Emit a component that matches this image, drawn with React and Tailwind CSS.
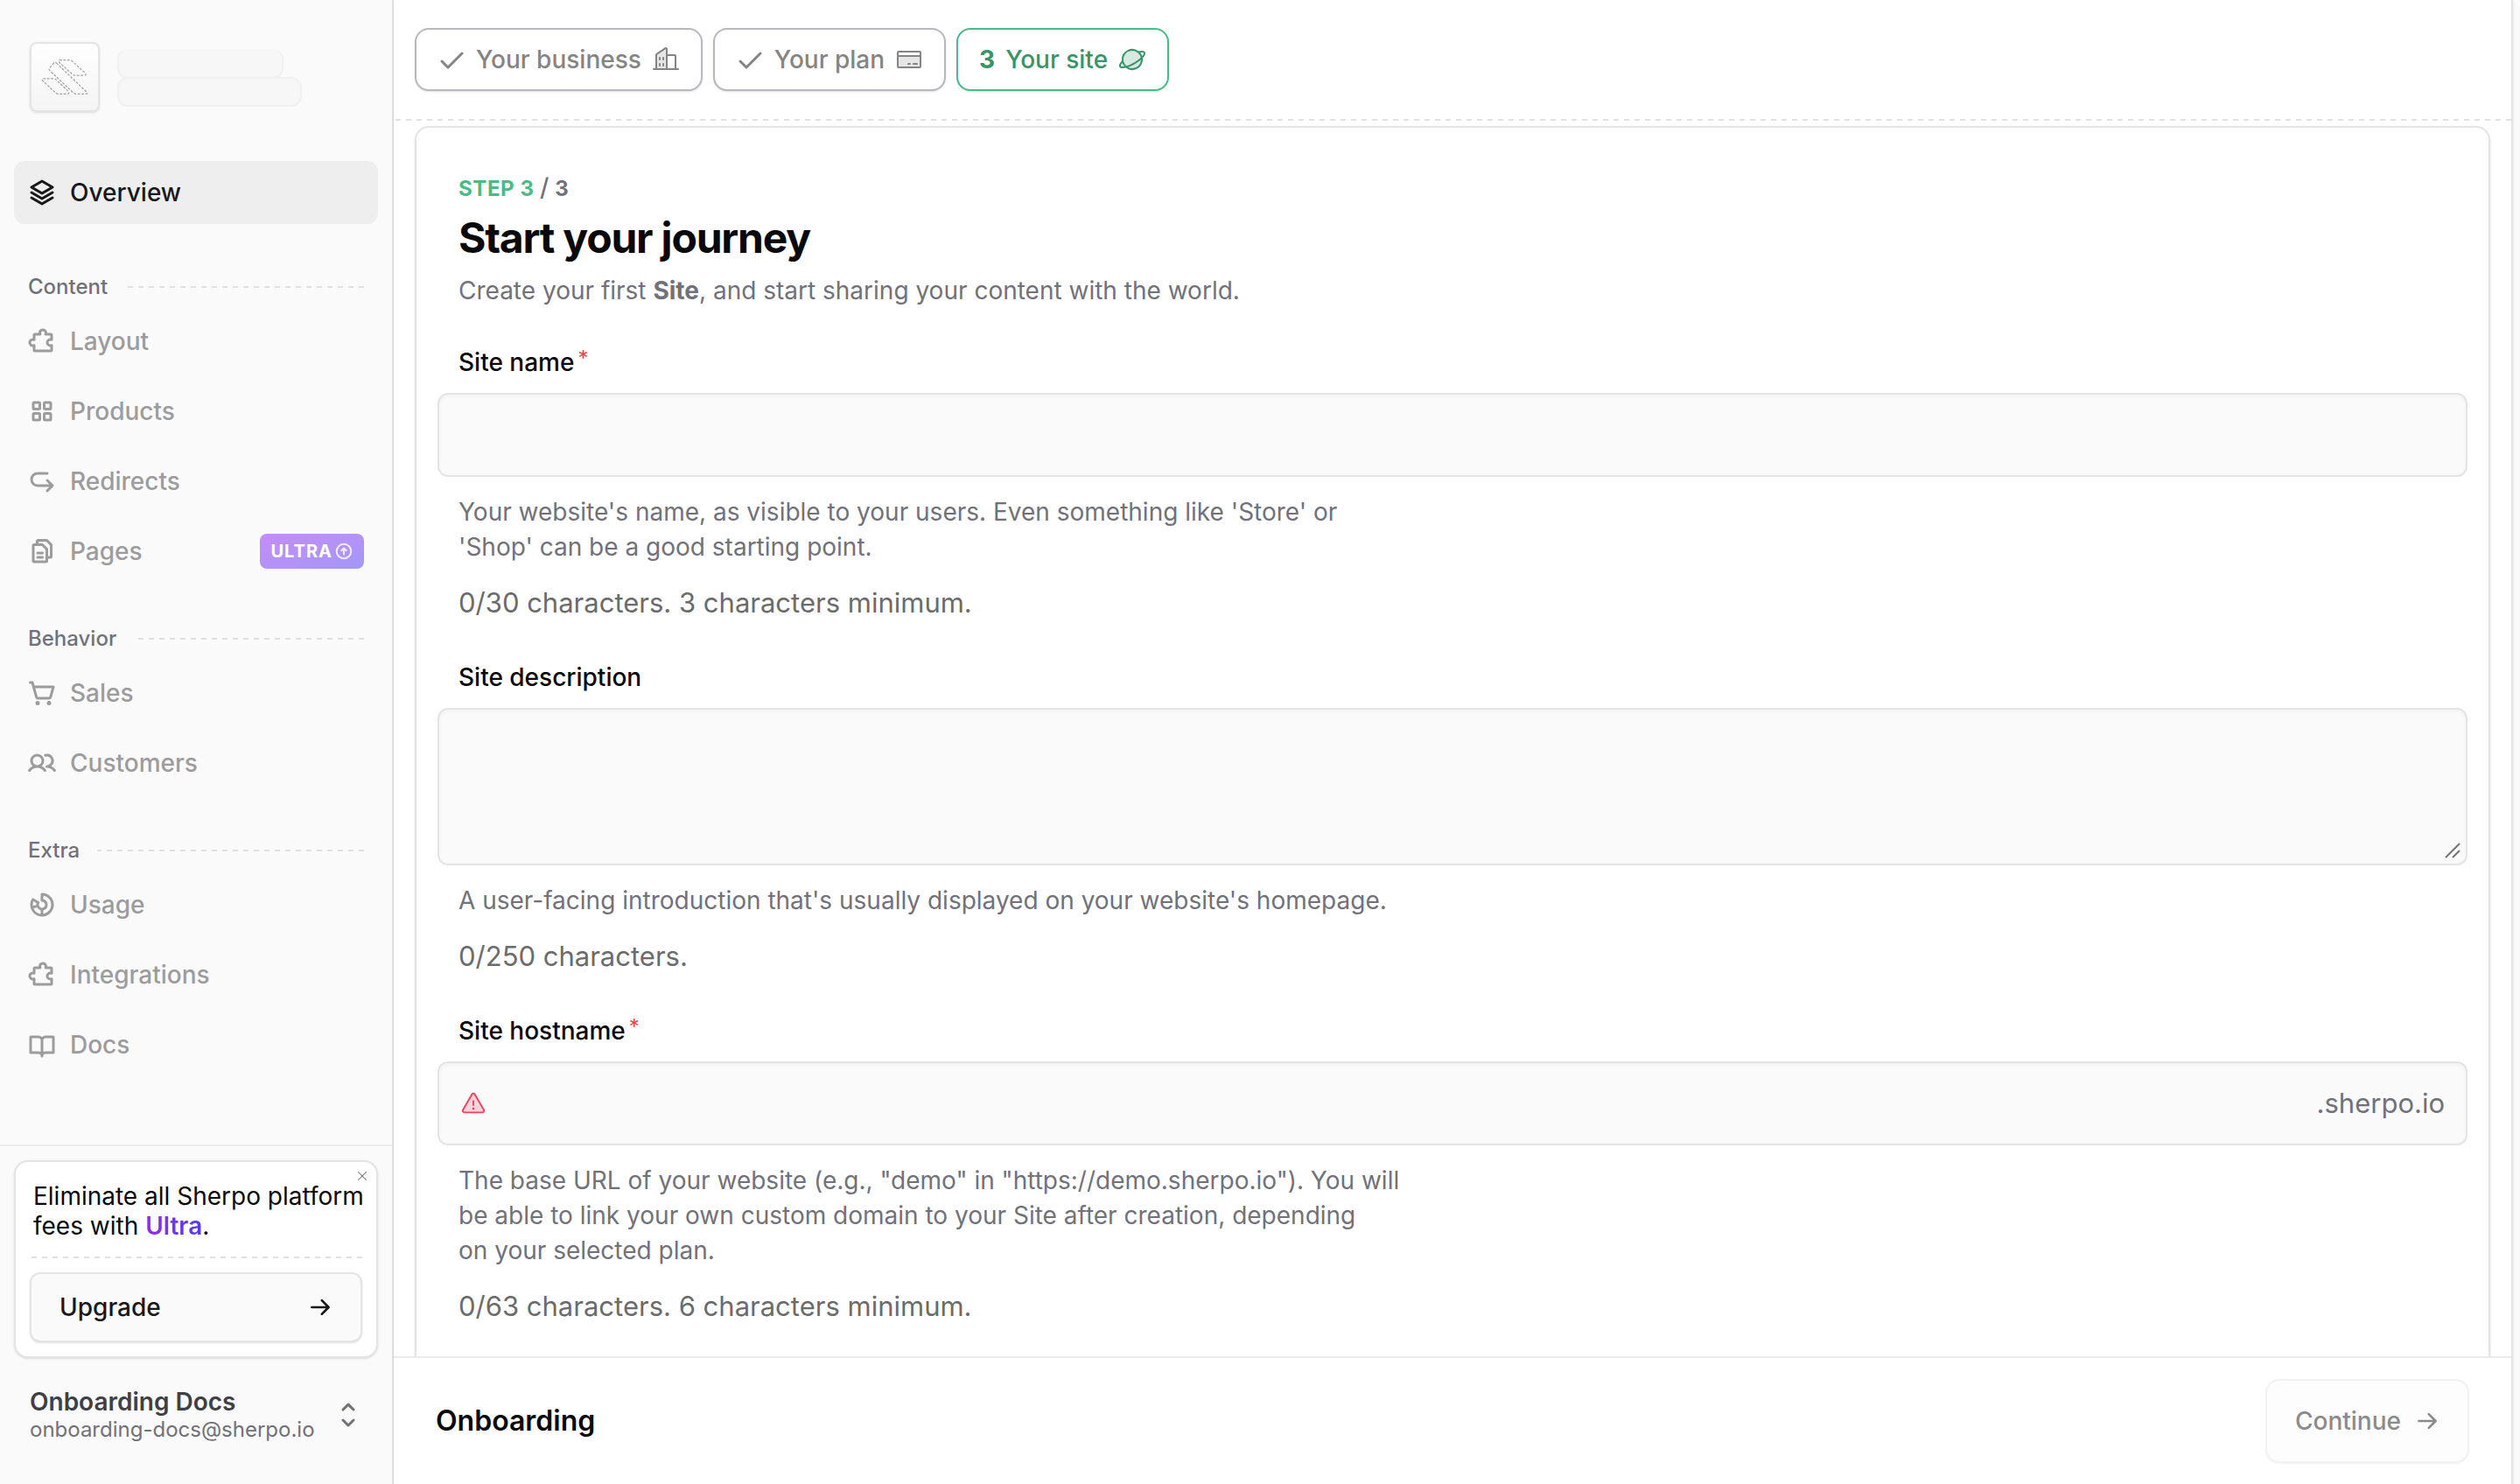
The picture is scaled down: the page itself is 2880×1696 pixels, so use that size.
import React from 'react';
import {
    PiArrowCircleUpBold,
    PiArrowRightBold,
    PiArrowUDownRightBold,
    PiBookOpenBold,
    PiBuildingsDuotone,
    PiCaretUpDownBold,
    PiChartDonutBold,
    PiCheckBold,
    PiCreditCardDuotone,
    PiFilesBold,
    PiPlanetDuotone,
    PiPuzzlePieceBold,
    PiShoppingCartSimpleBold,
    PiSquaresFourBold,
    PiStackBold,
    PiUsersBold,
    PiWarningDuotone,
    PiX
} from 'react-icons/pi';

const sections = [
    {
        title: 'Content',
        items: [
            { icon: PiPuzzlePieceBold, label: 'Layout' },
            { icon: PiSquaresFourBold, label: 'Products' },
            { icon: PiArrowUDownRightBold, label: 'Redirects' },
            { icon: PiFilesBold, label: 'Pages', ultra: true }
        ]
    },
    {
        title: 'Behavior',
        items: [
            { icon: PiShoppingCartSimpleBold, label: 'Sales' },
            { icon: PiUsersBold, label: 'Customers' }
        ]
    },
    {
        title: 'Extra',
        items: [
            { icon: PiChartDonutBold, label: 'Usage' },
            { icon: PiPuzzlePieceBold, label: 'Integrations' },
            { icon: PiBookOpenBold, label: 'Docs' }
        ]
    }
];

// Dashed rule, 6px on and 6px off
const DashedLine = ({ className = '' }) => (
    <div className={`h-[2px] bg-[repeating-linear-gradient(270deg,#e0e0e0_0_6px,transparent_6px_12px)] ${className}`} />
);

const Logo = () => (
    <svg viewBox="0 0 240 240" className="w-full h-full" fill="none" stroke="#a3a3a3" strokeWidth="4" strokeDasharray="9 5">
        <path d="M101 59H138Q143 59 147 63L194 106Q199 114 190 114H156Q151 114 147 110L101 68Q97 62 101 59Z" />
        <path d="M90 70L199 174Q204 181 196 181H160Q156 181 152 178L65 96Q62 92 65 88L80 70Q85 65 90 70Z" />
        <path d="M42 126H80Q85 126 89 130L133 172Q138 181 130 181H96Q92 181 88 178L41 134Q36 128 42 126Z" />
    </svg>
);

const UltraBadge = () => (
    <span className="ml-auto h-10 px-3 flex items-center gap-[2px] rounded-lg bg-gradient-to-br from-[#c48cf8] to-[#a298f5] text-white text-[20px] font-bold tracking-wider">
        ULTRA
        <PiArrowCircleUpBold size={22} className="opacity-80" />
    </span>
);

const Sidebar = () => (
    <aside className="w-[450px] shrink-0 flex flex-col bg-[#fafafa] border-r-2 border-[#e4e4e4]">
        <div className="flex items-center gap-5 px-[34px] pt-12">
            <div className="size-20 rounded-lg border-2 border-[#e4e4e7] bg-gradient-to-b from-white to-[#f4f4f5] shadow-sm">
                <Logo />
            </div>
            <div className="pt-[2px]">
                <div className="w-[190px] h-[34px] rounded-xl border-2 border-t-0 border-[#f0f0f0] bg-[#f7f7f7]" />
                <div className="w-[211px] h-[34px] -mt-[2px] rounded-xl border-2 border-[#f0f0f0] bg-[#f7f7f7]" />
            </div>
        </div>

        <nav className="px-4 pt-14 text-[28px] font-medium">
            <a href="#overview" className="h-[72px] px-4 flex items-center gap-4 rounded-xl bg-[#eeeeee] text-[#18181b]">
                <PiStackBold size={32} />
                Overview
            </a>
            <div className="mt-2">
                {sections.map((section) => (
                    <div key={section.title} className="pt-11">
                        <div className="h-10 mb-[6px] px-4 flex items-center gap-5">
                            <h2 className="text-[24px] text-[#71717a]">{section.title}</h2>
                            <DashedLine className="flex-1" />
                        </div>
                        <div className="flex flex-col gap-2">
                            {section.items.map((item) => {
                                const Icon = item.icon;
                                return (
                                    <a
                                        key={item.label}
                                        href={`#${item.label.toLowerCase()}`}
                                        className="h-[72px] px-4 flex items-center gap-4 rounded-xl text-[#9c9c9e]"
                                    >
                                        <Icon size={32} />
                                        {item.label}
                                        {item.ultra && <UltraBadge />}
                                    </a>
                                );
                            })}
                        </div>
                    </div>
                ))}
            </div>
        </nav>

        <div className="mt-auto px-4 pt-4 pb-[47px] border-t-2 border-[#ebebeb]">
            <div className="relative p-4 rounded-2xl border-2 border-[#e4e4e4] bg-white shadow-sm">
                <button aria-label="Dismiss" className="absolute top-2 right-2 text-[#71717a]">
                    <PiX size={16} />
                </button>
                <p className="px-1 pt-[6px] pb-[18px] text-[28px] leading-[34px] whitespace-nowrap text-[#09090b]">
                    Eliminate all Sherpo platform
                    <br />
                    fees with{' '}
                    <span className="font-semibold bg-gradient-to-r from-[#9327f5] to-[#4f39f6] bg-clip-text text-transparent">
                        Ultra
                    </span>
                    .
                </p>
                <DashedLine />
                <button className="mt-4 w-full h-20 px-8 flex items-center justify-between rounded-xl border-2 border-[#e4e4e4] bg-[#fafafa] text-[28px] font-medium text-[#18181b] shadow-sm">
                    Upgrade
                    <PiArrowRightBold size={28} />
                </button>
            </div>

            <button className="mt-[33px] w-full px-[18px] flex items-center justify-between text-left">
                <span>
                    <span className="block text-[28px] leading-[34px] font-semibold text-[#3f3f46]">Onboarding Docs</span>
                    <span className="block text-[24px] leading-[30px] text-[#71717a]">onboarding-docs@sherpo.io</span>
                </span>
                <PiCaretUpDownBold size={32} className="text-[#71717a]" />
            </button>
        </div>
    </aside>
);

const Step = ({ lead, label, icon: Icon, active }) => (
    <button
        className={`h-[72px] px-6 flex items-center gap-3 rounded-2xl border-2 bg-white text-[28px] font-medium shadow-sm ${
            active ? 'border-[#48bb86] text-[#369467]' : 'border-[#b8b8bd] text-[#848484]'
        }`}
    >
        {lead}
        {label}
        <Icon size={32} />
    </button>
);

const inputStyles = 'w-full rounded-xl border-2 border-[#e4e4e4] bg-[#fafafa] text-[31px] shadow-[inset_0_2px_4px_rgba(0,0,0,0.04)] outline-none';

const Field = ({ id, label, required, help, count, children }) => (
    <div>
        <label htmlFor={id} className="mb-[15px] px-6 flex items-start gap-1 text-[28px] leading-10 font-medium text-[#09090b]">
            {label}
            {required && <span className="text-[24px] leading-8 font-normal text-[#ef4444]">*</span>}
        </label>
        {children}
        <p className="mt-5 px-6 text-[28px] leading-10 text-[#71717a]">{help}</p>
        <p className="mt-5 px-6 text-[31px] leading-12 text-[#6b6b6b]">{count}</p>
    </div>
);

const App = () => {
    return (
        <div className="h-screen flex overflow-hidden bg-[#fafafa] font-['Inter',sans-serif]">
            <Sidebar />

            <main className="flex-1 min-w-0 mr-2 flex flex-col bg-white border-r-2 border-[#e4e4e4] shadow-sm">
                {/* Steps */}
                <div className="px-6 py-8 flex gap-3">
                    <Step lead={<PiCheckBold size={32} />} label="Your business" icon={PiBuildingsDuotone} />
                    <Step lead={<PiCheckBold size={32} />} label="Your plan" icon={PiCreditCardDuotone} />
                    <Step lead={<span className="font-bold">3</span>} label="Your site" icon={PiPlanetDuotone} active />
                </div>
                <DashedLine className="shrink-0" />

                {/* Form */}
                <div className="flex-1 min-h-0 overflow-hidden px-6 pt-[6px]">
                    <form className="px-6 pt-[54px] pb-12 rounded-2xl border-2 border-[#e4e4e4] shadow-sm">
                        <header className="px-6 mb-[42px]">
                            <p className="text-[24px] leading-8 font-bold tracking-wide text-[#71717a]">
                                <span className="text-[#48bb86]">STEP 3</span>{' '}
                                <span className="font-medium text-[28px] leading-none">/</span> 3
                            </p>
                            <h1 className="mt-3 text-[48px] leading-14 font-bold tracking-tight text-[#09090b]">Start your journey</h1>
                            <p className="mt-3 text-[28px] leading-10 text-[#71717a]">
                                Create your first <strong>Site</strong>, and start sharing your content with the world.
                            </p>
                        </header>

                        <div className="flex flex-col gap-[41px]">
                            <Field
                                id="site-name"
                                label="Site name"
                                required
                                help={
                                    <>
                                        Your website's name, as visible to your users. Even something like 'Store' or
                                        <br />
                                        'Shop' can be a good starting point.
                                    </>
                                }
                                count="0/30 characters. 3 characters minimum."
                            >
                                <input id="site-name" type="text" className={`block h-24 px-6 ${inputStyles}`} />
                            </Field>

                            <Field
                                id="site-description"
                                label="Site description"
                                help="A user-facing introduction that's usually displayed on your website's homepage."
                                count="0/250 characters."
                            >
                                <div className="relative">
                                    <textarea id="site-description" className={`block h-[180px] px-6 py-5 resize-none ${inputStyles}`} />
                                    <svg viewBox="0 0 18 18" className="absolute right-2 bottom-2 size-[18px]" stroke="#71717a" strokeWidth="2">
                                        <path d="M1 17L17 1M9 17L17 9" />
                                    </svg>
                                </div>
                            </Field>

                            <Field
                                id="site-hostname"
                                label="Site hostname"
                                required
                                help={
                                    <>
                                        The base URL of your website (e.g., "demo" in "https://demo.sherpo.io"). You will
                                        <br />
                                        be able to link your own custom domain to your Site after creation, depending
                                        <br />
                                        on your selected plan.
                                    </>
                                }
                                count="0/63 characters. 6 characters minimum."
                            >
                                <div className={`h-24 px-6 flex items-center gap-3 ${inputStyles}`}>
                                    <PiWarningDuotone size={30} className="text-[#f43f5e]" />
                                    <input id="site-hostname" type="text" className="flex-1 min-w-0 h-full outline-none" />
                                    <span className="text-[#71717a]">.sherpo.io</span>
                                </div>
                            </Field>
                        </div>
                    </form>
                </div>

                {/* Footer */}
                <footer className="py-6 px-12 flex items-center justify-between border-t-2 border-[#ebebeb]">
                    <p className="text-[32px] font-semibold text-[#09090b]">Onboarding</p>
                    <button
                        disabled
                        className="h-24 px-8 flex items-center gap-4 rounded-2xl border-2 border-[#f2f2f2] bg-[#fdfdfd] text-[28px] font-medium text-[#8b8b8d] shadow-xs"
                    >
                        Continue
                        <PiArrowRightBold size={28} />
                    </button>
                </footer>
            </main>
        </div>
    );
};

export default App;
